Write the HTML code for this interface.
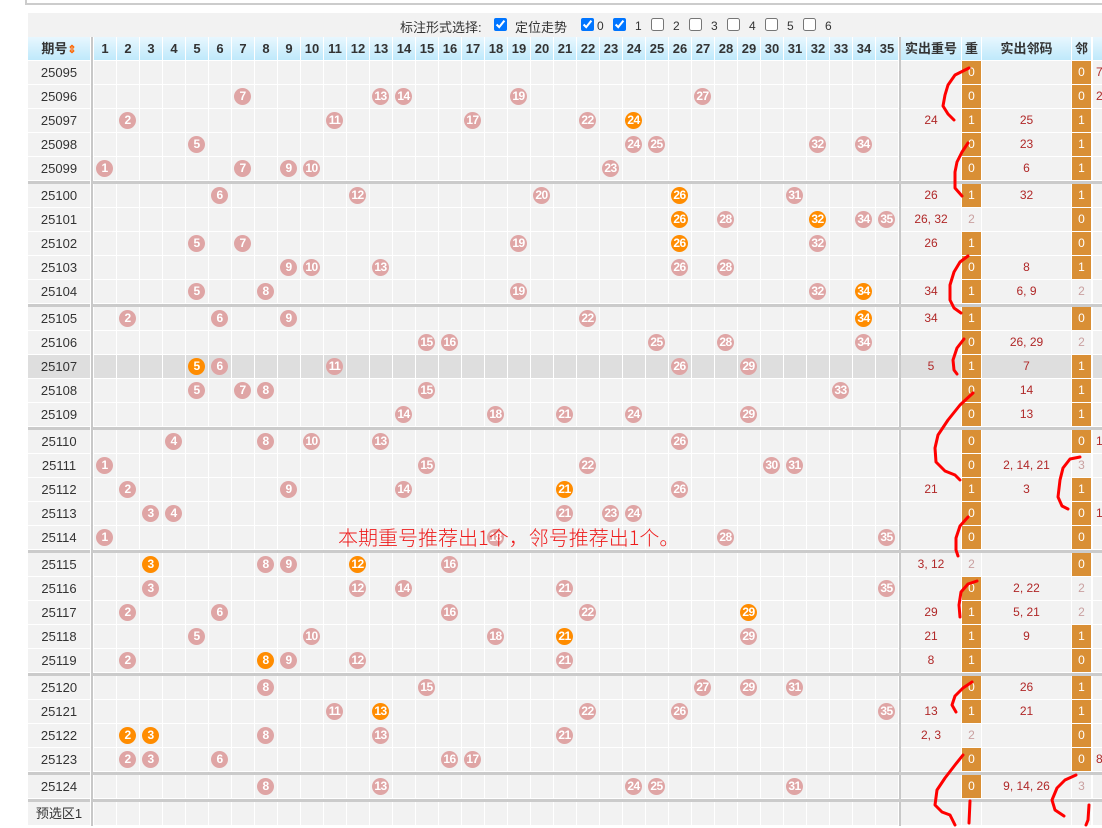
<!DOCTYPE html>
<html><head><meta charset="utf-8">
<style>
*{margin:0;padding:0;box-sizing:border-box}
body{width:1102px;height:828px;overflow:hidden;background:#fff;position:relative;font-family:"Liberation Sans","Noto Sans CJK SC",sans-serif}
.top{position:absolute;left:25px;top:0;width:1077px;height:5px;border-bottom:2px solid #ccc;border-left:2px solid #ccc}
.ctl{position:absolute;left:28px;top:13px;width:1074px;height:24px;background:#f2f2f2;font-size:13px;color:#333}
.ctl span{position:absolute;top:4px}
.ctl span.n{font-size:12px;top:6px}
.ctl input{position:absolute;top:5px;width:13px;height:13px;margin:0}
.hd{position:absolute;left:0;top:37px;width:1102px;height:24px}
.hd div{position:absolute;top:0;height:23px;background:linear-gradient(#e8f7fe,#bfe9fb);font:bold 13px/23px "Liberation Sans","Noto Sans CJK SC",sans-serif;color:#333;text-align:center}
.sepv{position:absolute;top:0;width:2px;height:24px;background:#c8c8c8}
#rows{position:absolute;left:0;top:61px;width:1102px}
.r{--c:#f2f2f2;position:relative;height:24px;background:
linear-gradient(90deg,transparent 91px,#c8c8c8 91px 93px,transparent 93px 899px,#c8c8c8 899px 901px,transparent 901px) 0 0/1102px 24px no-repeat,
repeating-linear-gradient(90deg,#fff 0 1px,var(--c) 1px 23px) 93px 0/806px 23px no-repeat,
linear-gradient(90deg,#fff 0 28px,var(--c) 28px 90px,#fff 90px 93px,#fff 898px 901px,var(--c) 901px 961px,#fff 961px 962px,var(--c) 962px 981px,#fff 981px 982px,var(--c) 982px 1071px,#fff 1071px 1072px,var(--c) 1072px 1091px,#fff 1091px 1093px,var(--c) 1093px) 0 0/1102px 23px no-repeat,#fff}
.g{--c:#dedede}
.s{height:3px;background:linear-gradient(90deg,#fff 0 28px,#cbcbcb 28px 90px,#fff 90px 91px,#c8c8c8 91px 93px,#cbcbcb 93px)}
.p{position:absolute;left:28px;width:62px;top:0;height:23px;font-size:13px;line-height:23px;text-align:center;color:#333}
.b{position:absolute;top:3px;width:17px;height:17px;border-radius:50%;background:#dfa5a5;color:#fff;font:bold 12px/17px "Liberation Sans",sans-serif;text-align:center;letter-spacing:-0.6px}
.o{background:#ff8c00}
.zh,.lm,.z,.l,.nx{position:absolute;top:0;height:23px;line-height:23px;font-size:12px;text-align:center;color:#b02828}
.zh{left:901px;width:60px}
.lm{left:982px;width:89px}
.z{left:962px;width:19px;color:#c9a0a0}
.l{left:1072px;width:19px;color:#c9a0a0}
.z.y,.l.y{background:#d98f35;color:#fff}
.nx{left:1096px;width:10px;text-align:left}
.msg{position:absolute;left:338px;top:523px;font:300 20px/28px "Noto Sans CJK SC",sans-serif;color:#ee1c1c;white-space:nowrap}
svg{position:absolute;left:0;top:0}
</style></head><body>
<div class="top"></div>
<div class="ctl">
<span style="left:372px">标注形式选择:</span>
<input type="checkbox" checked style="left:466px"><span style="left:487px">定位走势</span>
<input type="checkbox" checked style="left:553px"><span class="n" style="left:569px">0</span>
<input type="checkbox" checked style="left:585px"><span class="n" style="left:607px">1</span>
<input type="checkbox" style="left:623px"><span class="n" style="left:645px">2</span>
<input type="checkbox" style="left:661px"><span class="n" style="left:683px">3</span>
<input type="checkbox" style="left:699px"><span class="n" style="left:721px">4</span>
<input type="checkbox" style="left:737px"><span class="n" style="left:759px">5</span>
<input type="checkbox" style="left:775px"><span class="n" style="left:797px">6</span>
</div>
<div class="hd">
<div style="left:28px;width:62px">期号<span style="color:#f60;font-size:11px">⇕</span></div>
<span class="sepv" style="left:91px"></span>
<div style="left:94px;width:22px">1</div><div style="left:117px;width:22px">2</div><div style="left:140px;width:22px">3</div><div style="left:163px;width:22px">4</div><div style="left:186px;width:22px">5</div><div style="left:209px;width:22px">6</div><div style="left:232px;width:22px">7</div><div style="left:255px;width:22px">8</div><div style="left:278px;width:22px">9</div><div style="left:301px;width:22px">10</div><div style="left:324px;width:22px">11</div><div style="left:347px;width:22px">12</div><div style="left:370px;width:22px">13</div><div style="left:393px;width:22px">14</div><div style="left:416px;width:22px">15</div><div style="left:439px;width:22px">16</div><div style="left:462px;width:22px">17</div><div style="left:485px;width:22px">18</div><div style="left:508px;width:22px">19</div><div style="left:531px;width:22px">20</div><div style="left:554px;width:22px">21</div><div style="left:577px;width:22px">22</div><div style="left:600px;width:22px">23</div><div style="left:623px;width:22px">24</div><div style="left:646px;width:22px">25</div><div style="left:669px;width:22px">26</div><div style="left:692px;width:22px">27</div><div style="left:715px;width:22px">28</div><div style="left:738px;width:22px">29</div><div style="left:761px;width:22px">30</div><div style="left:784px;width:22px">31</div><div style="left:807px;width:22px">32</div><div style="left:830px;width:22px">33</div><div style="left:853px;width:22px">34</div><div style="left:876px;width:22px">35</div>
<span class="sepv" style="left:899px"></span>
<div style="left:901px;width:60px">实出重号</div><div style="left:962px;width:19px">重</div><div style="left:982px;width:89px">实出邻码</div><div style="left:1072px;width:19px">邻</div><div style="left:1093px;width:9px"></div>
</div>

<div id="rows">
<div class="r"><span class="p">25095</span><span class="z y">0</span><span class="l y">0</span><span class="nx">7</span></div>
<div class="r"><span class="p">25096</span><span class="b" style="left:234px">7</span><span class="b" style="left:372px">13</span><span class="b" style="left:395px">14</span><span class="b" style="left:510px">19</span><span class="b" style="left:694px">27</span><span class="z y">0</span><span class="l y">0</span><span class="nx">2</span></div>
<div class="r"><span class="p">25097</span><span class="b" style="left:119px">2</span><span class="b" style="left:326px">11</span><span class="b" style="left:464px">17</span><span class="b" style="left:579px">22</span><span class="b o" style="left:625px">24</span><span class="zh">24</span><span class="z y">1</span><span class="lm">25</span><span class="l y">1</span></div>
<div class="r"><span class="p">25098</span><span class="b" style="left:188px">5</span><span class="b" style="left:625px">24</span><span class="b" style="left:648px">25</span><span class="b" style="left:809px">32</span><span class="b" style="left:855px">34</span><span class="z y">0</span><span class="lm">23</span><span class="l y">1</span></div>
<div class="r"><span class="p">25099</span><span class="b" style="left:96px">1</span><span class="b" style="left:234px">7</span><span class="b" style="left:280px">9</span><span class="b" style="left:303px">10</span><span class="b" style="left:602px">23</span><span class="z y">0</span><span class="lm">6</span><span class="l y">1</span></div>
<div class="s"></div>
<div class="r"><span class="p">25100</span><span class="b" style="left:211px">6</span><span class="b" style="left:349px">12</span><span class="b" style="left:533px">20</span><span class="b o" style="left:671px">26</span><span class="b" style="left:786px">31</span><span class="zh">26</span><span class="z y">1</span><span class="lm">32</span><span class="l y">1</span></div>
<div class="r"><span class="p">25101</span><span class="b o" style="left:671px">26</span><span class="b" style="left:717px">28</span><span class="b o" style="left:809px">32</span><span class="b" style="left:855px">34</span><span class="b" style="left:878px">35</span><span class="zh">26, 32</span><span class="z">2</span><span class="l y">0</span></div>
<div class="r"><span class="p">25102</span><span class="b" style="left:188px">5</span><span class="b" style="left:234px">7</span><span class="b" style="left:510px">19</span><span class="b o" style="left:671px">26</span><span class="b" style="left:809px">32</span><span class="zh">26</span><span class="z y">1</span><span class="l y">0</span></div>
<div class="r"><span class="p">25103</span><span class="b" style="left:280px">9</span><span class="b" style="left:303px">10</span><span class="b" style="left:372px">13</span><span class="b" style="left:671px">26</span><span class="b" style="left:717px">28</span><span class="z y">0</span><span class="lm">8</span><span class="l y">1</span></div>
<div class="r"><span class="p">25104</span><span class="b" style="left:188px">5</span><span class="b" style="left:257px">8</span><span class="b" style="left:510px">19</span><span class="b" style="left:809px">32</span><span class="b o" style="left:855px">34</span><span class="zh">34</span><span class="z y">1</span><span class="lm">6, 9</span><span class="l">2</span></div>
<div class="s"></div>
<div class="r"><span class="p">25105</span><span class="b" style="left:119px">2</span><span class="b" style="left:211px">6</span><span class="b" style="left:280px">9</span><span class="b" style="left:579px">22</span><span class="b o" style="left:855px">34</span><span class="zh">34</span><span class="z y">1</span><span class="l y">0</span></div>
<div class="r"><span class="p">25106</span><span class="b" style="left:418px">15</span><span class="b" style="left:441px">16</span><span class="b" style="left:648px">25</span><span class="b" style="left:717px">28</span><span class="b" style="left:855px">34</span><span class="z y">0</span><span class="lm">26, 29</span><span class="l">2</span></div>
<div class="r g"><span class="p">25107</span><span class="b o" style="left:188px">5</span><span class="b" style="left:211px">6</span><span class="b" style="left:326px">11</span><span class="b" style="left:671px">26</span><span class="b" style="left:740px">29</span><span class="zh">5</span><span class="z y">1</span><span class="lm">7</span><span class="l y">1</span></div>
<div class="r"><span class="p">25108</span><span class="b" style="left:188px">5</span><span class="b" style="left:234px">7</span><span class="b" style="left:257px">8</span><span class="b" style="left:418px">15</span><span class="b" style="left:832px">33</span><span class="z y">0</span><span class="lm">14</span><span class="l y">1</span></div>
<div class="r"><span class="p">25109</span><span class="b" style="left:395px">14</span><span class="b" style="left:487px">18</span><span class="b" style="left:556px">21</span><span class="b" style="left:625px">24</span><span class="b" style="left:740px">29</span><span class="z y">0</span><span class="lm">13</span><span class="l y">1</span></div>
<div class="s"></div>
<div class="r"><span class="p">25110</span><span class="b" style="left:165px">4</span><span class="b" style="left:257px">8</span><span class="b" style="left:303px">10</span><span class="b" style="left:372px">13</span><span class="b" style="left:671px">26</span><span class="z y">0</span><span class="l y">0</span><span class="nx">1</span></div>
<div class="r"><span class="p">25111</span><span class="b" style="left:96px">1</span><span class="b" style="left:418px">15</span><span class="b" style="left:579px">22</span><span class="b" style="left:763px">30</span><span class="b" style="left:786px">31</span><span class="z y">0</span><span class="lm">2, 14, 21</span><span class="l">3</span></div>
<div class="r"><span class="p">25112</span><span class="b" style="left:119px">2</span><span class="b" style="left:280px">9</span><span class="b" style="left:395px">14</span><span class="b o" style="left:556px">21</span><span class="b" style="left:671px">26</span><span class="zh">21</span><span class="z y">1</span><span class="lm">3</span><span class="l y">1</span></div>
<div class="r"><span class="p">25113</span><span class="b" style="left:142px">3</span><span class="b" style="left:165px">4</span><span class="b" style="left:556px">21</span><span class="b" style="left:602px">23</span><span class="b" style="left:625px">24</span><span class="z y">0</span><span class="l y">0</span><span class="nx">1</span></div>
<div class="r"><span class="p">25114</span><span class="b" style="left:96px">1</span><span class="b" style="left:487px">18</span><span class="b" style="left:717px">28</span><span class="b" style="left:878px">35</span><span class="z y">0</span><span class="l y">0</span></div>
<div class="s"></div>
<div class="r"><span class="p">25115</span><span class="b o" style="left:142px">3</span><span class="b" style="left:257px">8</span><span class="b" style="left:280px">9</span><span class="b o" style="left:349px">12</span><span class="b" style="left:441px">16</span><span class="zh">3, 12</span><span class="z">2</span><span class="l y">0</span></div>
<div class="r"><span class="p">25116</span><span class="b" style="left:142px">3</span><span class="b" style="left:349px">12</span><span class="b" style="left:395px">14</span><span class="b" style="left:556px">21</span><span class="b" style="left:878px">35</span><span class="z y">0</span><span class="lm">2, 22</span><span class="l">2</span></div>
<div class="r"><span class="p">25117</span><span class="b" style="left:119px">2</span><span class="b" style="left:211px">6</span><span class="b" style="left:441px">16</span><span class="b" style="left:579px">22</span><span class="b o" style="left:740px">29</span><span class="zh">29</span><span class="z y">1</span><span class="lm">5, 21</span><span class="l">2</span></div>
<div class="r"><span class="p">25118</span><span class="b" style="left:188px">5</span><span class="b" style="left:303px">10</span><span class="b" style="left:487px">18</span><span class="b o" style="left:556px">21</span><span class="b" style="left:740px">29</span><span class="zh">21</span><span class="z y">1</span><span class="lm">9</span><span class="l y">1</span></div>
<div class="r"><span class="p">25119</span><span class="b" style="left:119px">2</span><span class="b o" style="left:257px">8</span><span class="b" style="left:280px">9</span><span class="b" style="left:349px">12</span><span class="b" style="left:556px">21</span><span class="zh">8</span><span class="z y">1</span><span class="l y">0</span></div>
<div class="s"></div>
<div class="r"><span class="p">25120</span><span class="b" style="left:257px">8</span><span class="b" style="left:418px">15</span><span class="b" style="left:694px">27</span><span class="b" style="left:740px">29</span><span class="b" style="left:786px">31</span><span class="z y">0</span><span class="lm">26</span><span class="l y">1</span></div>
<div class="r"><span class="p">25121</span><span class="b" style="left:326px">11</span><span class="b o" style="left:372px">13</span><span class="b" style="left:579px">22</span><span class="b" style="left:671px">26</span><span class="b" style="left:878px">35</span><span class="zh">13</span><span class="z y">1</span><span class="lm">21</span><span class="l y">1</span></div>
<div class="r"><span class="p">25122</span><span class="b o" style="left:119px">2</span><span class="b o" style="left:142px">3</span><span class="b" style="left:257px">8</span><span class="b" style="left:372px">13</span><span class="b" style="left:556px">21</span><span class="zh">2, 3</span><span class="z">2</span><span class="l y">0</span></div>
<div class="r"><span class="p">25123</span><span class="b" style="left:119px">2</span><span class="b" style="left:142px">3</span><span class="b" style="left:211px">6</span><span class="b" style="left:441px">16</span><span class="b" style="left:464px">17</span><span class="z y">0</span><span class="l y">0</span><span class="nx">8</span></div>
<div class="s"></div>
<div class="r"><span class="p">25124</span><span class="b" style="left:257px">8</span><span class="b" style="left:372px">13</span><span class="b" style="left:625px">24</span><span class="b" style="left:648px">25</span><span class="b" style="left:786px">31</span><span class="z y">0</span><span class="lm">9, 14, 26</span><span class="l">3</span></div>
<div class="s"></div>
<div class="r"><span class="p">预选区1</span></div>
</div>

<div class="msg">本期重号推荐出1个，邻号推荐出1个。</div>

<svg width="1102" height="828" fill="none" stroke="#f00" stroke-width="3" stroke-linecap="round" stroke-linejoin="round">
<path d="M969 68 L955 75 L948 85 L945 95 L943 106 L948 114 L954 120"/>
<path d="M968 143 L962 152 L957 162 L955 172 L955 188 L962 196"/>
<path d="M968 256 L960 262 L954 272 L950 285 L950 300 L954 308 L961 313"/>
<path d="M964 339 L957 348 L953 360 L954 370 L957 374"/>
<path d="M973 393 L960 405 L948 420 L938 435 L935 448 L936 462 L945 471 L955 475 L960 480"/>
<path d="M1080 457 L1070 459 L1063 468 L1060 480 L1058 497 L1062 506 L1068 509"/>
<path d="M968 517 L960 526 L956 538 L956 550 L958 556"/>
<path d="M977 581 L968 584 L961 592 L959 605 L960 617"/>
<path d="M972 682 L963 688 L955 696 L952 705 L956 712"/>
<path d="M963 755 L955 765 L945 778 L937 790 L935 805 L942 812 L950 815 L955 825"/>
<path d="M970 801 L969 823"/>
<path d="M1076 775 L1065 780 L1057 788 L1052 800 L1055 810 L1064 816"/>
<path d="M1089 805 L1088 820 L1086 825"/>
</svg>
</body></html>
